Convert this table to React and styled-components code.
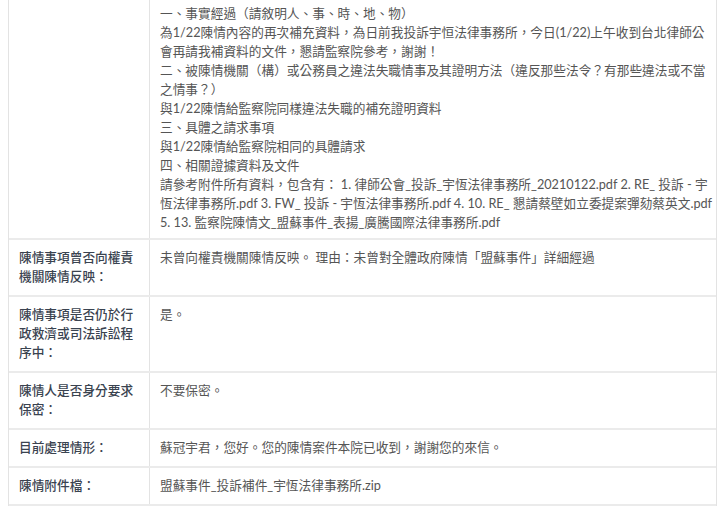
import React from 'react'
import styled, { createGlobalStyle } from 'styled-components'

const GlobalStyle = createGlobalStyle`
  body {
    margin: 0 0 0 8px;
    background: #fff;
    font-family: Lato, "Noto Sans CJK TC", sans-serif;
  }
`

const Table = styled.div`
  width: 709px;
  margin-top: -4px;
  border-left: 1px solid #e3e3e3;
  border-right: 1px solid #e3e3e3;
  box-sizing: border-box;
  font-size: 12.7px;
  line-height: 19px;
`

const Row = styled.div`
  display: grid;
  grid-template-columns: 141px 1fr;
  border-bottom: 2px solid #ebebeb;
`

const Label = styled.div`
  padding: 8px 10px 9px;
  border-right: 1px solid #e3e3e3;
  color: #3a4350;
  font-weight: 500;
`

const Content = styled.div`
  padding: 8px 10px ${p => p.$bottom || 9}px;
  color: #555;
  white-space: nowrap;
`

const Line = styled.span`
  display: block;
`

const rows = [
  {
    label: '',
    bottom: 6,
    lines: [
      '一、事實經過（請敘明人、事、時、地、物）',
      '為1/22陳情內容的再次補充資料，為日前我投訴宇恒法律事務所，今日(1/22)上午收到台北律師公',
      '會再請我補資料的文件，懇請監察院參考，謝謝！',
      '二、被陳情機關（構）或公務員之違法失職情事及其證明方法（違反那些法令？有那些違法或不當',
      '之情事？）',
      '與1/22陳情給監察院同樣違法失職的補充證明資料',
      '三、具體之請求事項',
      '與1/22陳情給監察院相同的具體請求',
      '四、相關證據資料及文件',
      '請參考附件所有資料，包含有： 1. 律師公會_投訴_宇恆法律事務所_20210122.pdf 2. RE_ 投訴 - 宇',
      '恆法律事務所.pdf 3. FW_ 投訴 - 宇恆法律事務所.pdf 4. 10. RE_ 懇請蔡壁如立委提案彈劾蔡英文.pdf',
      '5. 13. 監察院陳情文_盟蘇事件_表揚_廣騰國際法律事務所.pdf',
    ],
  },
  {
    label: '陳情事項曾否向權責機關陳情反映：',
    lines: ['未曾向權責機關陳情反映。 理由：未曾對全體政府陳情「盟蘇事件」詳細經過'],
  },
  {
    label: '陳情事項是否仍於行政救濟或司法訴訟程序中：',
    lines: ['是。'],
  },
  {
    label: '陳情人是否身分要求保密：',
    lines: ['不要保密。'],
  },
  {
    label: '目前處理情形：',
    lines: ['蘇冠宇君，您好。您的陳情案件本院已收到，謝謝您的來信。'],
  },
  {
    label: '陳情附件檔：',
    lines: ['盟蘇事件_投訴補件_宇恆法律事務所.zip'],
  },
]

export default function App() {
  return (
    <>
      <GlobalStyle />
      <Table>
        {rows.map((r, i) => (
          <Row key={i}>
            <Label>{r.label}</Label>
            <Content $bottom={r.bottom}>
              {r.lines.map((l, j) => (
                <Line key={j}>{l}</Line>
              ))}
            </Content>
          </Row>
        ))}
      </Table>
    </>
  )
}
